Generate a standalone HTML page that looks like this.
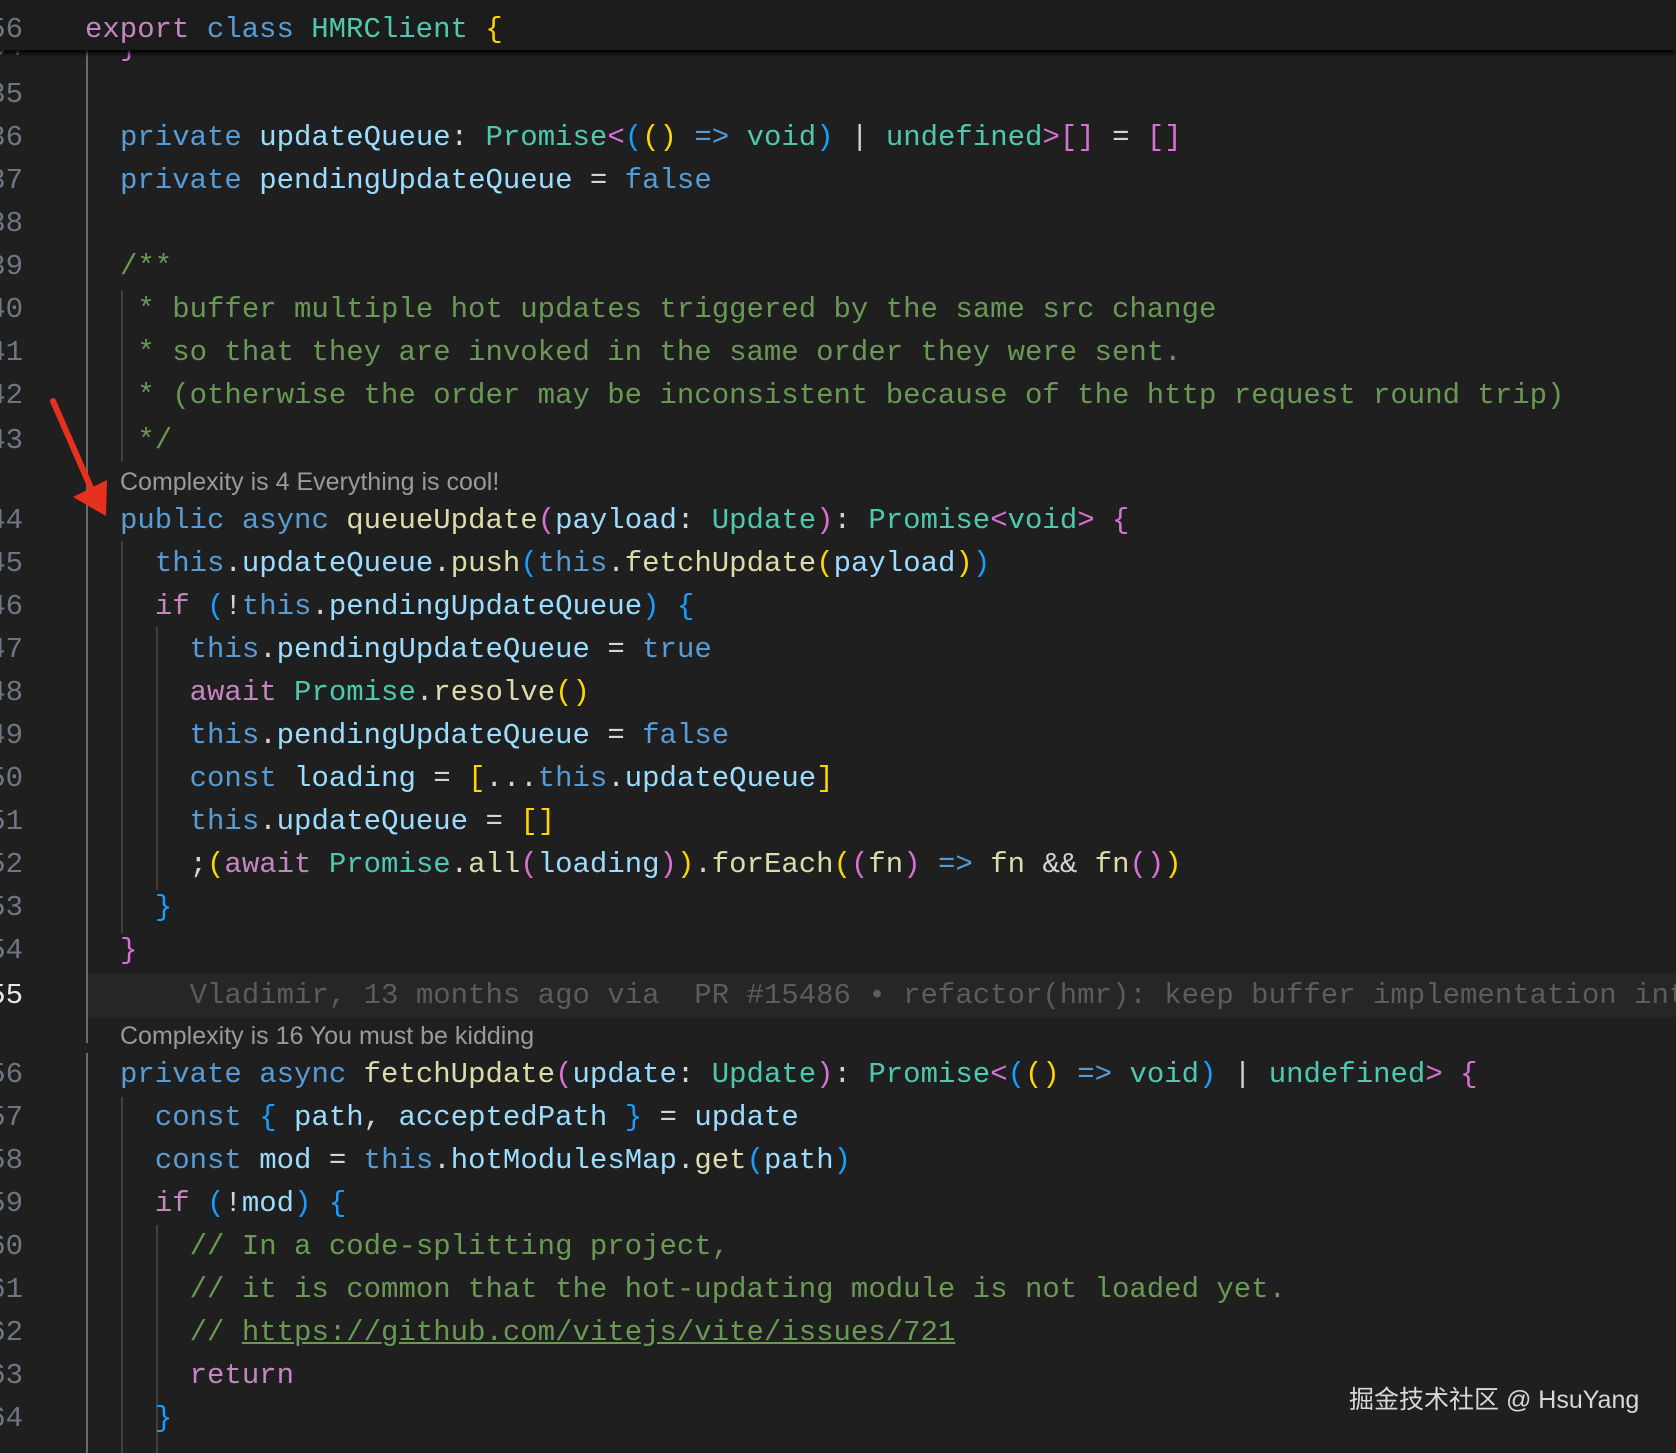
<!DOCTYPE html>
<html><head><meta charset="utf-8">
<style>
html,body{margin:0;padding:0;}
body{width:1676px;height:1450px;background:#1f1f1f;position:relative;overflow:hidden;font-family:"Liberation Mono",monospace;font-size:29px;color:#d4d4d4;}
#w{position:absolute;left:0;top:3px;width:1676px;height:1447px;}
.r{position:absolute;left:0;height:43px;line-height:43px;white-space:pre;width:1676px;overflow:hidden;}
.n{position:absolute;right:1653px;color:#6e7681;text-align:right;}
.n.cur{color:#e6e6e6;}
.c0{position:absolute;left:120px;}
.k{color:#569cd6}.c{color:#c586c0}.v{color:#9cdcfe}.f{color:#dcdcaa}.t{color:#4ec9b0}.m{color:#6a9955}
.b1{color:#ffd700}.b2{color:#da70d6}.b3{color:#179fff}
.lens{position:absolute;left:120px;font-family:"Liberation Sans",sans-serif;font-size:25px;color:#9a9a9a;height:36px;line-height:36px;white-space:nowrap;}
.g{position:absolute;width:2px;background:#404040;}
#hdr{position:absolute;left:0;top:0;width:1676px;height:50px;background:#1c1c1c;box-shadow:0 3px 5px #000;z-index:5;overflow:hidden;}
</style></head><body>

<div id="w">
<!-- indent guides -->
<div class="g" style="left:86px;top:47px;height:993px;background:#6a6a6a"></div>
<div class="g" style="left:86px;top:1050px;height:400px;background:#6a6a6a"></div>
<div class="g" style="left:121px;top:287px;height:172px"></div>
<div class="g" style="left:121px;top:538px;height:392px"></div>
<div class="g" style="left:156px;top:624px;height:263px"></div>
<div class="g" style="left:121px;top:1094px;height:356px"></div>
<div class="g" style="left:156px;top:1222px;height:228px"></div>

<div class="r" style="top:23px"><span class="n">34</span><span class="c0"><span class="b2">}</span></span></div>
<div class="r" style="top:70px"><span class="n">35</span></div>
<div class="r" style="top:113px"><span class="n">36</span><span class="c0"><span class="k">private</span> <span class="v">updateQueue</span>: <span class="t">Promise</span><span class="b2">&lt;</span><span class="b3">(</span><span class="b1">()</span> <span class="k">=&gt;</span> <span class="t">void</span><span class="b3">)</span> | <span class="t">undefined</span><span class="b2">&gt;[]</span> = <span class="b2">[]</span></span></div>
<div class="r" style="top:156px"><span class="n">37</span><span class="c0"><span class="k">private</span> <span class="v">pendingUpdateQueue</span> = <span class="k">false</span></span></div>
<div class="r" style="top:199px"><span class="n">38</span></div>
<div class="r" style="top:242px"><span class="n">39</span><span class="c0 m">/**</span></div>
<div class="r" style="top:285px"><span class="n">40</span><span class="c0 m"> * buffer multiple hot updates triggered by the same src change</span></div>
<div class="r" style="top:328px"><span class="n">41</span><span class="c0 m"> * so that they are invoked in the same order they were sent.</span></div>
<div class="r" style="top:371px"><span class="n">42</span><span class="c0 m"> * (otherwise the order may be inconsistent because of the http request round trip)</span></div>
<div class="r" style="top:416px"><span class="n">43</span><span class="c0 m"> */</span></div>
<div class="lens" style="top:461px">Complexity is 4 Everything is cool!</div>
<div class="r" style="top:496px"><span class="n">44</span><span class="c0"><span class="k">public</span> <span class="k">async</span> <span class="f">queueUpdate</span><span class="b2">(</span><span class="v">payload</span>: <span class="t">Update</span><span class="b2">)</span>: <span class="t">Promise</span><span class="b2">&lt;</span><span class="t">void</span><span class="b2">&gt;</span> <span class="b2">{</span></span></div>
<div class="r" style="top:539px"><span class="n">45</span><span class="c0">  <span class="k">this</span>.<span class="v">updateQueue</span>.<span class="f">push</span><span class="b3">(</span><span class="k">this</span>.<span class="f">fetchUpdate</span><span class="b1">(</span><span class="v">payload</span><span class="b1">)</span><span class="b3">)</span></span></div>
<div class="r" style="top:582px"><span class="n">46</span><span class="c0">  <span class="c">if</span> <span class="b3">(</span>!<span class="k">this</span>.<span class="v">pendingUpdateQueue</span><span class="b3">)</span> <span class="b3">{</span></span></div>
<div class="r" style="top:625px"><span class="n">47</span><span class="c0">    <span class="k">this</span>.<span class="v">pendingUpdateQueue</span> = <span class="k">true</span></span></div>
<div class="r" style="top:668px"><span class="n">48</span><span class="c0">    <span class="c">await</span> <span class="t">Promise</span>.<span class="f">resolve</span><span class="b1">()</span></span></div>
<div class="r" style="top:711px"><span class="n">49</span><span class="c0">    <span class="k">this</span>.<span class="v">pendingUpdateQueue</span> = <span class="k">false</span></span></div>
<div class="r" style="top:754px"><span class="n">50</span><span class="c0">    <span class="k">const</span> <span class="v">loading</span> = <span class="b1">[</span>...<span class="k">this</span>.<span class="v">updateQueue</span><span class="b1">]</span></span></div>
<div class="r" style="top:797px"><span class="n">51</span><span class="c0">    <span class="k">this</span>.<span class="v">updateQueue</span> = <span class="b1">[]</span></span></div>
<div class="r" style="top:840px"><span class="n">52</span><span class="c0">    ;<span class="b1">(</span><span class="c">await</span> <span class="t">Promise</span>.<span class="f">all</span><span class="b2">(</span><span class="v">loading</span><span class="b2">)</span><span class="b1">)</span>.<span class="f">forEach</span><span class="b1">(</span><span class="b2">(</span><span class="f">fn</span><span class="b2">)</span> <span class="k">=&gt;</span> <span class="f">fn</span> &amp;&amp; <span class="f">fn</span><span class="b2">()</span><span class="b1">)</span></span></div>
<div class="r" style="top:883px"><span class="n">53</span><span class="c0">  <span class="b3">}</span></span></div>
<div class="r" style="top:926px"><span class="n">54</span><span class="c0"><span class="b2">}</span></span></div>
<div class="r" style="top:971px;left:88px;width:1588px;background:#262626"></div>
<div class="r" style="top:971px"><span class="n cur">55</span><span class="c0" style="color:#5c5c5c">    Vladimir, 13 months ago via  PR #15486 • refactor(hmr): keep buffer implementation internal</span></div>
<div class="lens" style="top:1015px">Complexity is 16 You must be kidding</div>
<div class="r" style="top:1050px"><span class="n">56</span><span class="c0"><span class="k">private</span> <span class="k">async</span> <span class="f">fetchUpdate</span><span class="b2">(</span><span class="v">update</span>: <span class="t">Update</span><span class="b2">)</span>: <span class="t">Promise</span><span class="b2">&lt;</span><span class="b3">(</span><span class="b1">()</span> <span class="k">=&gt;</span> <span class="t">void</span><span class="b3">)</span> | <span class="t">undefined</span><span class="b2">&gt;</span> <span class="b2">{</span></span></div>
<div class="r" style="top:1093px"><span class="n">57</span><span class="c0">  <span class="k">const</span> <span class="b3">{</span> <span class="v">path</span>, <span class="v">acceptedPath</span> <span class="b3">}</span> = <span class="v">update</span></span></div>
<div class="r" style="top:1136px"><span class="n">58</span><span class="c0">  <span class="k">const</span> <span class="v">mod</span> = <span class="k">this</span>.<span class="v">hotModulesMap</span>.<span class="f">get</span><span class="b3">(</span><span class="v">path</span><span class="b3">)</span></span></div>
<div class="r" style="top:1179px"><span class="n">59</span><span class="c0">  <span class="c">if</span> <span class="b3">(</span>!<span class="v">mod</span><span class="b3">)</span> <span class="b3">{</span></span></div>
<div class="r" style="top:1222px"><span class="n">60</span><span class="c0 m">    // In a code-splitting project,</span></div>
<div class="r" style="top:1265px"><span class="n">61</span><span class="c0 m">    // it is common that the hot-updating module is not loaded yet.</span></div>
<div class="r" style="top:1308px"><span class="n">62</span><span class="c0 m">    // <span style="text-decoration:underline">https://github.com/vitejs/vite/issues/721</span></span></div>
<div class="r" style="top:1351px"><span class="n">63</span><span class="c0">    <span class="c">return</span></span></div>
<div class="r" style="top:1394px"><span class="n">64</span><span class="c0">  <span class="b3">}</span></span></div>
</div>

<div id="hdr"><div class="r" style="top:8px"><span class="n">56</span><span style="position:absolute;left:85px"><span class="c">export</span> <span class="k">class</span> <span class="t">HMRClient</span> <span class="b1">{</span></span></div></div>

<div style="position:absolute;left:1349px;top:1380px;font-family:'Liberation Sans','Noto Sans CJK SC',sans-serif;font-size:25px;color:#d8d8d8;white-space:nowrap">掘金技术社区 @ HsuYang</div>

<svg style="position:absolute;left:0;top:0" width="200" height="560">
<line x1="53" y1="401" x2="94" y2="495" stroke="#e8301f" stroke-width="6" stroke-linecap="round"/>
<polygon points="106,516 73,497 107,480" fill="#e8301f"/>
</svg>
</body></html>
